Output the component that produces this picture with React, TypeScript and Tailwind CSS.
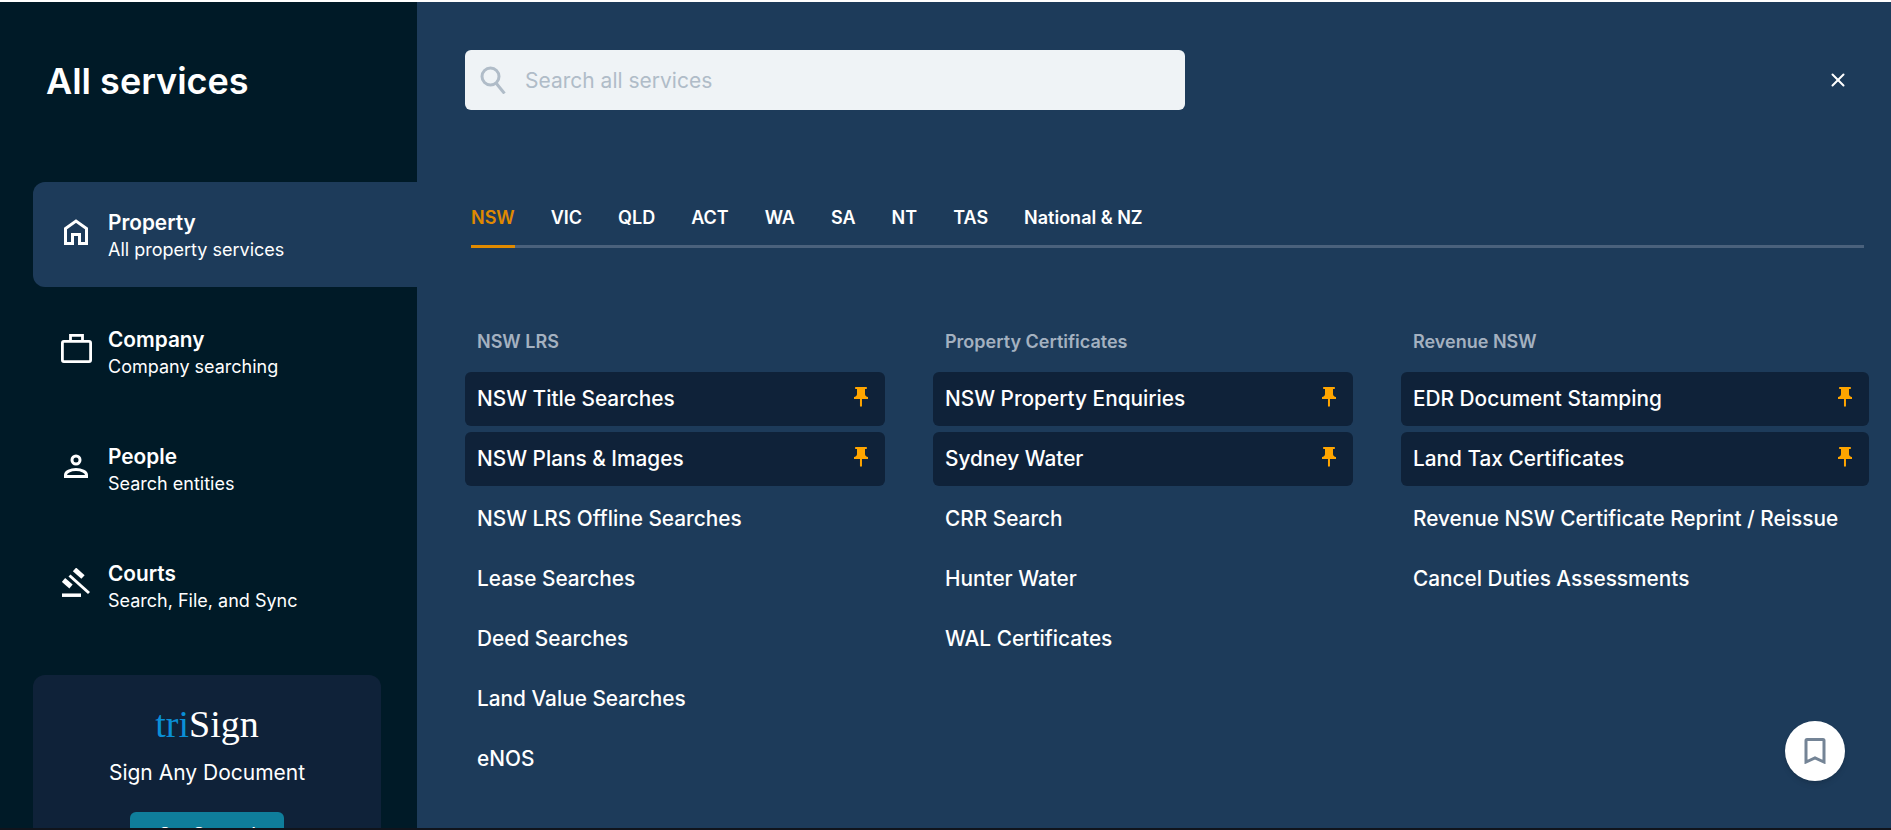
import { X } from "lucide-react";
import { MdPushPin } from "react-icons/md";

const Home = () => (
  <svg viewBox="0 0 24 26" className="h-[26px] w-[24px]" fill="none" stroke="currentColor" strokeWidth="3">
    <path d="M1.500 24.500V9.500L12 2l10.500 7.500v15H15.500v-9h-7v9z" />
  </svg>
);
const Case = () => (
  <svg viewBox="0 0 31 29" className="h-[29px] w-[31px]" fill="none" stroke="currentColor" strokeWidth="2.800">
    <rect x="1.400" y="7.400" width="28.200" height="20.200" rx="1.500" />
    <path d="M9.500 7V1.400h12V7" />
  </svg>
);
const Person = () => (
  <svg viewBox="0 0 24 24" className="h-[24px] w-[24px]" fill="none" stroke="currentColor" strokeWidth="3">
    <circle cx="12" cy="6" r="4" />
    <path d="M1.500 22.500V21c0-3 5-5.500 10.500-5.500S22.500 18 22.500 21v1.500z" />
  </svg>
);
const Gavel = () => (
  <svg viewBox="0 0 28 29" className="h-[29px] w-[28px]" fill="none" stroke="currentColor">
    <path d="M0 27.200h19" strokeWidth="3.500" />
    <path d="M7.500 7.500 27 25" strokeWidth="3" />
    <path d="M12.500 1.500 21 9" strokeWidth="5" />
    <path d="M1.500 12 9 18.500" strokeWidth="5" />
  </svg>
);

const nav = [
  { t: "Property", s: "All property services", i: <Home />, active: true },
  { t: "Company", s: "Company searching", i: <Case /> },
  { t: "People", s: "Search entities", i: <Person /> },
  { t: "Courts", s: "Search, File, and Sync", i: <Gavel /> },
];
const tabs = ["NSW", "VIC", "QLD", "ACT", "WA", "SA", "NT", "TAS", "National & NZ"];
const cols = [
  { h: "NSW LRS", pinned: ["NSW Title Searches", "NSW Plans & Images"], rest: ["NSW LRS Offline Searches", "Lease Searches", "Deed Searches", "Land Value Searches", "eNOS"] },
  { h: "Property Certificates", pinned: ["NSW Property Enquiries", "Sydney Water"], rest: ["CRR Search", "Hunter Water", "WAL Certificates"] },
  { h: "Revenue NSW", pinned: ["EDR Document Stamping", "Land Tax Certificates"], rest: ["Revenue NSW Certificate Reprint / Reissue", "Cancel Duties Assessments"] },
];

export default function App() {
  return (
    <div className="h-[830px] w-[1891px] overflow-hidden bg-[#10141c] font-['Inter',sans-serif] text-white">
      <div className="h-[2px] bg-white" />
      <div className="flex h-[826px] overflow-hidden">
        <aside className="flex w-[417px] shrink-0 flex-col overflow-hidden bg-[#001a27] pl-[33px]">
          <h1 className="mt-[56px] ml-[13px] h-[46px] text-[36px] leading-[46px] font-semibold">All services</h1>
          <nav className="mt-[78px] flex flex-col gap-[12px]">
            {nav.map((n) => (
              <div key={n.t} className={`flex h-[105px] items-center rounded-l-xl pl-[27px] ${n.active ? "bg-[#1d3b5a]" : ""}`}>
                <div className="mb-[6px] flex w-[32px] justify-center">{n.i}</div>
                <div className="ml-[16px] pt-[2px]">
                  <div className="text-[20.800px] leading-[28px] font-semibold">{n.t}</div>
                  <div className="text-[18px] leading-[26px]">{n.s}</div>
                </div>
              </div>
            ))}
          </nav>
          <div className="mt-[37px] flex w-[348px] shrink-0 flex-col items-center rounded-t-xl bg-[#0f2239] pt-[27px]">
            <div className="font-['Liberation_Serif',serif] text-[38px] leading-[44px]">
              <span className="text-[#0a8fd6]">tri</span>Sign
            </div>
            <div className="mt-[13px] text-[21px] leading-[28px]">Sign Any Document</div>
            <div className="mt-[25px] flex h-[44px] w-[154px] items-center justify-center rounded-md bg-[#0f7e9b] text-[18px] font-medium">Get Started</div>
          </div>
        </aside>
        <main className="relative flex-1 bg-[#1d3b5a] pt-[48px] pr-[22px] pl-[48px]">
          <div className="flex items-center justify-between">
            <div className="flex h-[60px] w-[720px] items-center rounded-md bg-[#eff3f6] pl-[15px]">
              <svg viewBox="0 0 29 28" className="h-[28px] w-[29px] text-[#b0bcc8]" fill="none" stroke="currentColor" strokeWidth="3">
                <circle cx="10.500" cy="10.500" r="8.500" />
                <path d="M16 17l8.500 10.500" />
              </svg>
              <span className="ml-[16px] pt-[1px] text-[21px] text-[#b0bcc8]">Search all services</span>
            </div>
            <X className="mr-[20px] h-[22px] w-[22px] text-white" strokeWidth={2.2} />
          </div>
          <div className="mt-[96px] mr-[5px] ml-[6px] flex gap-[36px] border-b-[3px] border-[#4a617c] text-[18px] font-semibold">
            {tabs.map((t, i) => (
              <div key={t} className={`-mb-[3px] h-[42px] border-b-[3px] leading-[24px] ${i === 0 ? "border-[#e08a00] text-[#e08a00]" : "border-transparent"}`}>{t}</div>
            ))}
          </div>
          <div className="mt-[80px] grid grid-cols-[420px_420px_468px] gap-[48px]">
            {cols.map((c) => (
              <div key={c.h}>
                <div className="mb-[16px] h-[28px] pl-[12px] text-[18px] leading-[28px] font-semibold text-[#a4b1c0]">{c.h}</div>
                <div className="flex flex-col gap-[6px]">
                  {c.pinned.map((p) => (
                    <div key={p} className="flex h-[54px] items-center justify-between rounded-md bg-[#0f2239] pr-[12px] pl-[12px] text-[20.800px] font-medium">
                      {p}
                      <MdPushPin className="mb-[4px] h-[24px] w-[24px] text-[#ffa500]" />
                    </div>
                  ))}
                  {c.rest.map((p) => (
                    <div key={p} className="flex h-[54px] items-center pl-[12px] text-[20.800px] font-medium whitespace-nowrap">{p}</div>
                  ))}
                </div>
              </div>
            ))}
          </div>
          <div className="absolute right-[46px] bottom-[47px] flex h-[60px] w-[60px] items-center justify-center rounded-full bg-white shadow-md">
            <svg viewBox="0 0 22 26" className="h-[26px] w-[22px] text-[#748496]" fill="none" stroke="currentColor" strokeWidth="3">
              <path d="M2 24V2.500C2 2 2.500 1.500 3 1.500h16c.5 0 1 .5 1 1V24l-9-4z" />
            </svg>
          </div>
        </main>
      </div>
    </div>
  );
}
